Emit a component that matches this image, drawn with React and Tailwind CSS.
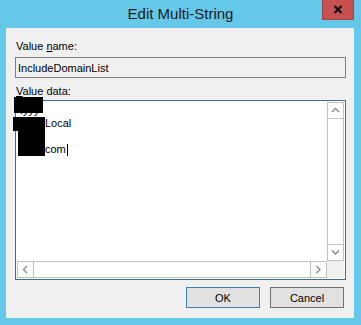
import React from 'react'

const font = { fontFamily: '"Liberation Sans", Arial, sans-serif' }

function Chevron({ dir }) {
  const pts = {
    up: '1,5 4.5,1.5 8,5',
    down: '1,1.5 4.5,5 8,1.5',
    left: '5,1 1.5,4.5 5,8',
    right: '1.5,1 5,4.5 1.5,8',
  }[dir]
  const vert = dir === 'up' || dir === 'down'
  return (
    <svg width={vert ? 9 : 7} height={vert ? 7 : 9} viewBox={vert ? '0 0 9 7' : '0 0 7 9'} fill="none">
      <polyline points={pts} stroke="#8a8a8a" strokeWidth="1.4" />
    </svg>
  )
}

function ScrollButton({ dir }) {
  return (
    <div className="w-[17px] h-[17px] border border-[#c2c2c2] bg-white flex items-center justify-center">
      <Chevron dir={dir} />
    </div>
  )
}

export default function App() {
  return (
    <div className="relative w-[361px] h-[325px] bg-[#65c8e9] overflow-hidden text-black" style={font}>
      {/* Title bar */}
      <div className="relative h-[28px] flex items-center justify-center">
        <span className="text-[15px] leading-none text-[#1b1b1b] -mt-[1px]">Edit Multi-String</span>
        <button className="absolute top-0 right-[7px] w-[32px] h-[20px] bg-[#c75050] border border-t-0 border-[#a04343] flex items-center justify-center">
          <svg width="10" height="9" viewBox="0 0 10 9">
            <path d="M1.5 1 L8.5 8 M8.5 1 L1.5 8" stroke="#111" strokeWidth="2.2" />
          </svg>
        </button>
      </div>

      {/* Client area */}
      <div className="mx-[6px] w-[348px] h-[290px] bg-[#f0f0f0] pl-[9px] pt-[11px] flex flex-col text-[11px] leading-[14px]">
        <div className="ml-[1px] h-[14px]">
          Value <span className="underline">n</span>ame:
        </div>
        <div className="mt-[4px] w-[331px] h-[21px] border border-[#7f7f7f] bg-[#f0f0f0] flex items-center pl-[2px]">
          IncludeDomainList
        </div>
        <div className="mt-[6px] ml-[1px] h-[14px]">
          <span className="underline">V</span>alue data:
        </div>
        <div className="mt-[2px] w-[331px] h-[180px] border border-[#3c6e9a] bg-white p-[1px]">
          <div className="grid grid-cols-[1fr_17px] grid-rows-[1fr_17px] h-full">
            <div className="pl-[3px] pt-[2px] leading-[13px]">
              <div className="flex">
                <span className="inline-block w-[24px]">.yyy</span>
              </div>
              <div className="flex">
                <span className="inline-block w-[25px]" />
                <span>Local</span>
              </div>
              <div>&nbsp;</div>
              <div className="flex items-center">
                <span className="inline-block w-[25px]" />
                <span>com</span>
                <span className="ml-[1px] w-[1px] h-[12px] bg-black" />
              </div>
            </div>
            <div className="flex flex-col bg-white border-x border-[#c2c2c2]">
              <div className="-mx-[1px]"><ScrollButton dir="up" /></div>
              <div className="flex-1" />
              <div className="-mx-[1px]"><ScrollButton dir="down" /></div>
            </div>
            <div className="flex bg-white border-y border-[#c2c2c2]">
              <div className="-my-[1px]"><ScrollButton dir="left" /></div>
              <div className="flex-1" />
              <div className="-my-[1px]"><ScrollButton dir="right" /></div>
            </div>
            <div className="bg-[#f0f0f0]" />
          </div>
        </div>
        <div className="mt-[7px] pr-[10px] flex justify-end gap-[10px]">
          <button className="w-[74px] h-[21px] border border-[#3c7fb1] bg-[#e1e1e1] text-[11px]">OK</button>
          <button className="w-[74px] h-[21px] border border-[#707070] bg-[#e1e1e1] text-[11px]">Cancel</button>
        </div>
      </div>

      {/* Redaction boxes */}
      <div className="absolute left-[14px] top-[97px] w-[29px] h-[16px] bg-black" />
      <div className="absolute left-[13px] top-[117px] w-[32px] h-[14px] bg-black" />
      <div className="absolute left-[18px] top-[131px] w-[27px] h-[25px] bg-black" />
    </div>
  )
}
